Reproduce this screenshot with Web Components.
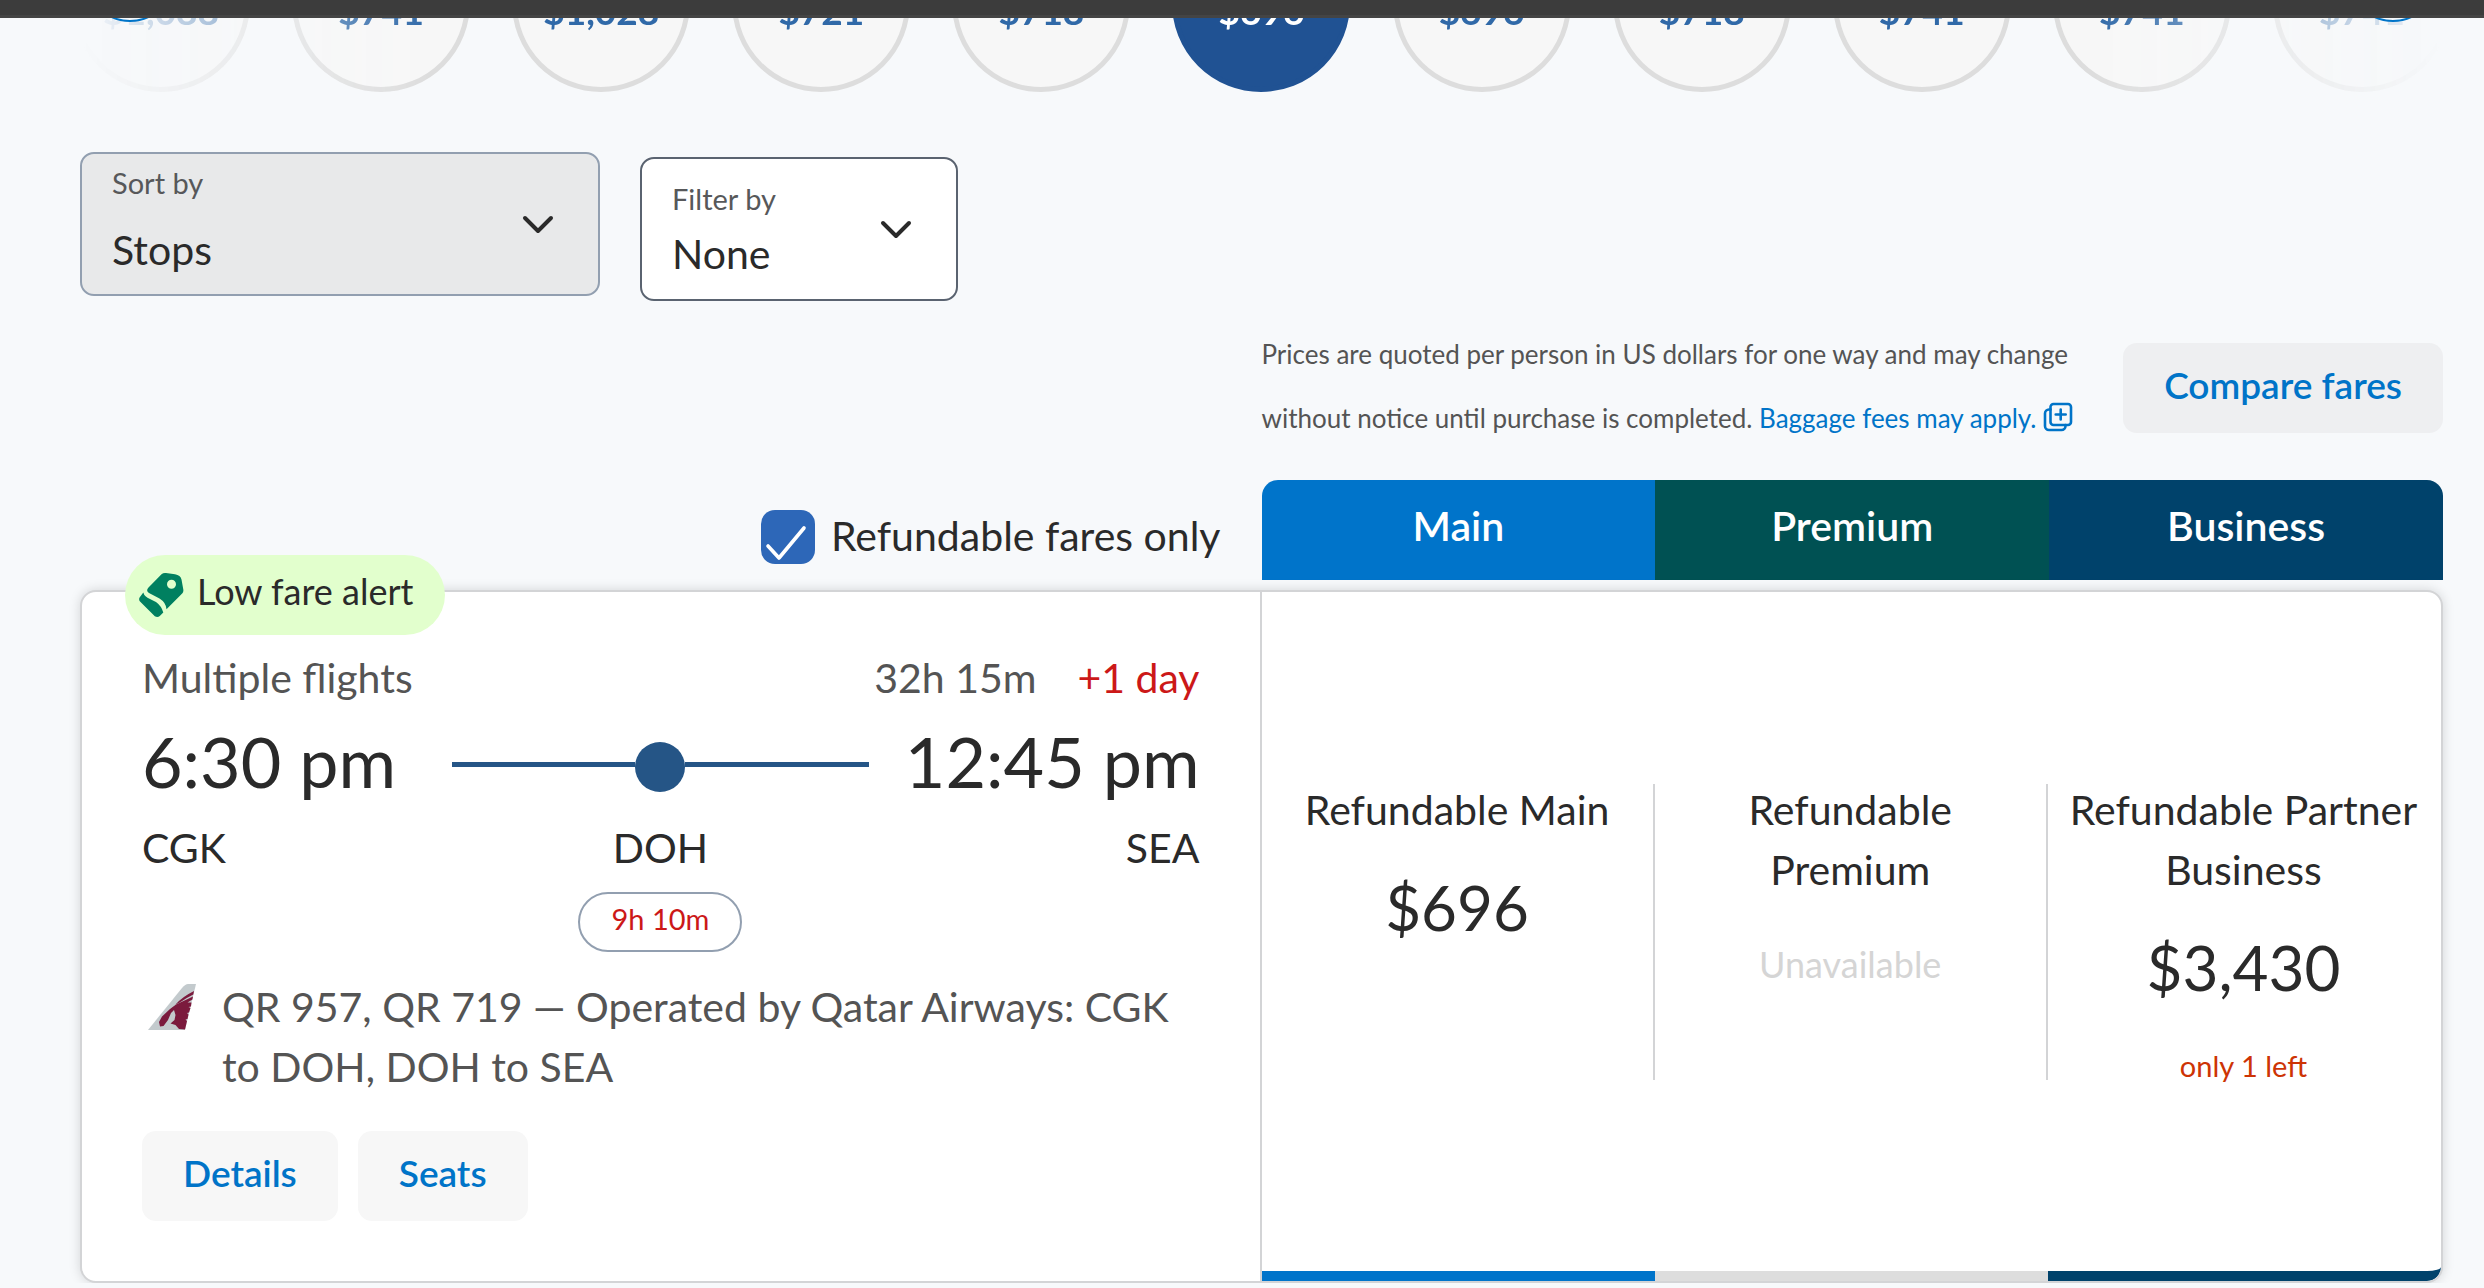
<!DOCTYPE html>
<html lang="en">
<head>
<meta charset="utf-8">
<title>Flight results</title>
<style>
  body {
    margin: 0;
    background: #f7f9fb;
    color: #2a2a2a;
    font-family: Lato, "Liberation Sans", sans-serif;
    font-size: 41px;
    line-height: 60px;
    --page: #f7f9fb;
    --link: #0074c8;
    --muted: #545454;
    --line: #d3d4d6;
    --edge: #929fb0;
  }
</style>
</head>
<body>
<flight-results></flight-results>

<script>
const define = (name, html, setup) => {
  const template = document.createElement('template');
  template.innerHTML = html;
  customElements.define(name, class extends HTMLElement {
    constructor() {
      super();
      this.attachShadow({ mode: 'open' }).append(template.content.cloneNode(true));
    }
    connectedCallback() {
      if (setup) setup(this, this.shadowRoot);
    }
  });
};

define('top-bar', `
  <style>
    :host { display: block; height: 15px; background: #3c3c3c; border-bottom: 3px solid #444; }
  </style>`);

define('date-price', `
  <style>
    :host { display: flex; justify-content: center; }
    button {
      box-sizing: border-box; width: 178px; height: 178px; padding: 0 0 56px;
      display: flex; align-items: flex-end; justify-content: center;
      border: 5px solid #ddd; border-radius: 50%; background: #f7f7f7;
      font: inherit; font-size: 37px; line-height: 40px; font-weight: 700; color: #3069a8;
    }
    :host([selected]) button { background: #205293; border-color: #205293; color: #fff; }
  </style>
  <button type="button"><slot></slot></button>`);

define('date-strip', `
  <style>
    :host { display: block; position: relative; overflow: hidden; height: 74px; }
    .days {
      height: 100%; margin: 0 12px 0 51px;
      display: grid; grid-template: 100% / repeat(11, 1fr); align-items: end;
      -webkit-mask: linear-gradient(90deg, transparent 30px, #000 380px, #000 calc(100% - 380px), transparent calc(100% - 30px));
      mask: linear-gradient(90deg, transparent 30px, #000 380px, #000 calc(100% - 380px), transparent calc(100% - 30px));
    }
    .arrow {
      position: absolute; bottom: 70px; box-sizing: border-box; width: 88px; height: 88px; padding: 0;
      border: 2px solid var(--link); border-radius: 50%; background: var(--page);
    }
    .prev { left: 86px; }
    .next { right: 47px; }
  </style>
  <div class="days"><slot></slot></div>
  <button class="arrow prev" type="button" aria-label="Earlier dates"></button>
  <button class="arrow next" type="button" aria-label="Later dates"></button>`);

define('select-field', `
  <style>
    :host {
      box-sizing: border-box; height: 144px; padding: 0 40px 0 30px;
      display: grid; grid-template-columns: 1fr auto; align-items: center;
      border: 2px solid #5a6370; border-radius: 14px; background: #fff;
    }
    :host([shaded]) { border-color: var(--edge); background: #e8e9ea; }
    .text { display: flex; flex-direction: column; gap: 5px; padding-top: 5px; }
    :host([shaded]) .text { gap: 17px; padding: 0 0 6px; }
    label { font-size: 29px; line-height: 40px; color: #57585a; }
    select {
      appearance: none; margin: 0; padding: 0; border: 0; background: none; width: 100%;
      font: inherit; line-height: 60px; height: 60px; color: inherit;
    }
    svg { width: 40px; height: 40px; pointer-events: none; }
  </style>
  <div class="text">
    <label for="value"></label>
    <select id="value"><option></option></select>
  </div>
  <svg viewBox="0 0 40 40" fill="none" stroke="#2a2a2a" stroke-width="4" stroke-linecap="round" stroke-linejoin="round"><path d="M7 14 20 27 33 14"/></svg>`,
  (host, root) => {
    root.querySelector('label').textContent = host.getAttribute('label');
    root.querySelector('option').textContent = host.getAttribute('value');
  });

define('soft-button', `
  <style>
    :host { display: block; }
    button {
      height: 90px; padding: 0 41px 7px; border: 0; border-radius: 14px;
      background: var(--soft, #f7f7f7); color: var(--link);
      font: inherit; font-size: 37px; font-weight: 600; white-space: nowrap;
    }
  </style>
  <button type="button"><slot></slot></button>`);

define('refundable-toggle', `
  <style>
    :host { display: block; }
    label { display: flex; align-items: flex-end; gap: 16px; }
    .box { display: grid; padding-bottom: 2px; }
    .box > * { grid-area: 1 / 1; }
    input { appearance: none; margin: 0; width: 54px; height: 54px; border-radius: 14px; background: #2d67b8; }
    svg { width: 54px; height: 54px; pointer-events: none; }
  </style>
  <label for="refundable">
    <span class="box">
      <input id="refundable" type="checkbox" checked>
      <svg viewBox="0 0 54 54" fill="none" stroke="#fff" stroke-width="3.6" stroke-linecap="round" stroke-linejoin="round"><path d="M7 36 18 48 43 18"/></svg>
    </span>
    <span><slot></slot></span>
  </label>`);

define('cabin-tabs', `
  <style>
    :host { display: grid; grid-template-columns: repeat(3, 1fr); border-radius: 16px 16px 0 0; overflow: hidden; }
    div { height: 100px; display: flex; align-items: center; justify-content: center; box-sizing: border-box; padding-bottom: 8px;
      color: #fff; font-weight: 600; }
    .main { background: #0074ca; }
    .premium { background: #005153; }
    .business { background: #00426b; }
  </style>
  <div class="main">Main</div><div class="premium">Premium</div><div class="business">Business</div>`);

define('fare-notice', `
  <style>
    :host { display: flex; align-items: flex-end; justify-content: space-between; gap: 40px; }
    p { margin: 0; flex: 1; font-size: 26px; line-height: 64px; color: var(--muted); }
    a { color: var(--link); text-decoration: none; }
    svg { width: 30px; height: 30px; margin-left: 6px; vertical-align: -4px; }
    soft-button { --soft: #eeeff1; margin-bottom: 17px; }
  </style>
  <p>Prices are quoted per person in US dollars for one way and may change without notice until purchase is completed. <a href="#baggage">Baggage fees may apply.<svg viewBox="0 0 30 30" fill="none" stroke="#0074c8" stroke-width="2.6" stroke-linecap="round" stroke-linejoin="round"><rect x="7.500" y="2" width="20.500" height="21" rx="3"/><path d="M17.700 7.500v10M12.700 12.500h10M7.500 7.500H6a4 4 0 0 0-4 4V24a4 4 0 0 0 4 4H18.500a4 4 0 0 0 4-4V23"/></svg></a></p>
  <soft-button>Compare fares</soft-button>`);

define('alert-pill', `
  <style>
    :host {
      height: 80px; padding: 0 32px 0 14px; display: inline-flex; align-items: center; gap: 13px;
      border-radius: 40px; background: #e2ffcd; font-size: 36px; white-space: nowrap;
    }
    svg { width: 45px; height: 44px; }
    span { padding-bottom: 9px; }
  </style>
  <svg viewBox="0 0 45 44" fill="#008060"><path fill-rule="evenodd" d="M22.500 1.200Q24.500-.3 27 .1L36 1.200Q41.500 2.200 42.500 6.500L44.400 17Q44.500 19 43.400 20.300L27.500 36.300Q27 29.500 20.500 25.500L10 20Q6.500 17.600 9.500 14.400ZM32.500 6.800a4.500 4.500 0 1 0 0 9 4.500 4.500 0 0 0 0-9Z"/><path d="M4.300 19.500Q5.500 23.800 11 26L17 29Q22.500 33 24.300 39.500L20.800 43Q18.500 44.800 15.800 43.200L1 28.500Q-.5 26.500.6 24.500Z"/></svg>
  <span><slot></slot></span>`);

define('flight-route', `
  <style>
    :host { display: grid; grid-template-columns: minmax(274px, auto) 1fr auto; column-gap: 36px; color: #2a2a2a; }
    .time { font-size: 70px; line-height: 90px; margin: 8px 0 12px; white-space: nowrap; }
    .path { display: flex; align-items: center; padding-top: 8px; }
    .path i { flex: 1; height: 5px; margin-bottom: 5px; background: #255586; }
    .path b { width: 50px; height: 50px; border-radius: 50%; background: #255586; }
    .mid { display: flex; flex-direction: column; align-items: center; gap: 14px; }
    .end { text-align: right; }
    .wait {
      box-sizing: border-box; height: 60px; padding: 0 31px; border: 2px solid var(--edge); border-radius: 30px;
      font-size: 29px; line-height: 50px; color: #cc1818;
    }
  </style>
  <div class="time">6:30 pm</div>
  <div class="path"><i></i><b></b><i></i></div>
  <div class="time end">12:45 pm</div>
  <div>CGK</div>
  <div class="mid"><span>DOH</span><span class="wait">9h 10m</span></div>
  <div class="end">SEA</div>`);

define('fare-option', `
  <style>
    :host {
      --bar: #ddd; display: flex; align-items: center;
      border-bottom: 10px solid var(--bar);
    }
    :host([last]) { border-bottom-right-radius: 14px; }
    button {
      box-sizing: border-box; width: 100%; height: 296px; padding: 0 16px; margin: 0;
      display: flex; flex-direction: column; align-items: center; justify-content: flex-start;
      border: 0; border-right: 2px solid var(--line); background: none; font: inherit; color: #2a2a2a;
    }
    :host([last]) button { border-right-color: transparent; }
    .name { margin-top: -4px; }
    .price { margin-top: 31px; font-size: 62px; line-height: 72px; }
    .none { margin-top: 44px; font-size: 36px; line-height: 40px; color: #d5d5d5; }
    .left { margin-top: 48px; font-size: 29px; line-height: 30px; color: #cd3405; }
  </style>
  <button type="button"><span class="name"></span></button>`,
  (host, root) => {
    const button = root.querySelector('button');
    root.querySelector('.name').textContent = host.getAttribute('name');
    host.style.setProperty('--bar', host.getAttribute('bar'));
    for (const part of ['price', 'none', 'left']) {
      if (!host.hasAttribute(part)) continue;
      const line = document.createElement('span');
      line.className = part;
      line.textContent = host.getAttribute(part);
      button.append(line);
    }
    button.disabled = host.hasAttribute('none');
  });

define('flight-card', `
  <style>
    :host { display: block; position: relative; }
    article {
      display: grid; grid-template-columns: 1fr 1fr; overflow: hidden;
      border: 2px solid var(--line); border-radius: 16px; background: #fff;
      box-shadow: 0 0 12px rgba(0, 0, 0, .15);
    }
    .trip { padding: 56px 60px 60px; border-right: 2px solid var(--line); }
    .summary { display: flex; color: var(--muted); }
    .summary span:first-child { flex: 1; }
    .plus { margin-left: 41px; color: #cc1818; }
    .operator { display: flex; gap: 26px; margin-top: 25px; color: var(--muted); }
    .operator svg { flex: none; width: 48px; height: 46px; margin: 7px 0 0 6px; }
    .actions { display: flex; gap: 20px; margin-top: 34px; }
    .fares { display: grid; grid-template-columns: repeat(3, 1fr); }
    alert-pill { position: absolute; left: 45px; top: -35px; }
  </style>
  <article>
    <div class="trip">
      <div class="summary"><span>Multiple flights</span><span>32h 15m</span><span class="plus">+1 day</span></div>
      <flight-route></flight-route>
      <div class="operator">
        <svg viewBox="0 0 48 46"><path fill="#c3cacd" d="M0 46 34 4Q37.500 0 40 0H48L37 46Z"/><g fill="#7b1a3d"><path d="M46 7Q34 13 27.500 20.500L31 19Q38 14 45.300 10.500Z"/><path d="M45 12.500 44.400 15.500 39.500 18.500H43.500L43 22.500 40.500 23 42.500 24 41 28.500 39 29 40.500 30.500 39.500 35 37.500 35.500 39 37 37 45.500 31 45 27.500 41 22.500 39.500 26.500 36 27.500 31 26 26 23 29 20 36 15.500 42 12 42.500 11 38 14 32.500 22 25 28 20.500Z"/></g></svg>
        <span>QR 957, QR 719 — Operated by Qatar Airways: CGK to DOH, DOH to SEA</span>
      </div>
      <div class="actions"><soft-button>Details</soft-button><soft-button>Seats</soft-button></div>
    </div>
    <div class="fares">
      <fare-option name="Refundable Main" price="$696" bar="#0074ca"></fare-option>
      <fare-option name="Refundable Premium" none="Unavailable" bar="#dddddd"></fare-option>
      <fare-option name="Refundable Partner Business" price="$3,430" left="only 1 left" bar="#00426b" last></fare-option>
    </div>
  </article>
  <alert-pill>Low fare alert</alert-pill>`);

define('flight-results', `
  <style>
    :host { display: block; }
    main { margin: 60px 41px 0 80px; }
    .filters { display: flex; gap: 40px; height: 149px; }
    .sort { width: 520px; }
    .filter { width: 318px; align-self: flex-end; }
    .head { display: grid; grid-template-columns: 1fr 1fr; margin: 21px 0 10px; }
    refundable-toggle { justify-self: end; align-self: end; padding: 0 41px 14px 0; }
    fare-notice { margin-bottom: 30px; }
  </style>
  <top-bar></top-bar>
  <date-strip>
    <date-price>$1,088</date-price><date-price>$741</date-price><date-price>$1,028</date-price>
    <date-price>$721</date-price><date-price>$718</date-price><date-price selected>$696</date-price>
    <date-price>$696</date-price><date-price>$718</date-price><date-price>$741</date-price>
    <date-price>$741</date-price><date-price>$741</date-price>
  </date-strip>
  <main>
    <div class="filters">
      <select-field class="sort" label="Sort by" value="Stops" shaded></select-field>
      <select-field class="filter" label="Filter by" value="None"></select-field>
    </div>
    <div class="head">
      <refundable-toggle>Refundable fares only</refundable-toggle>
      <div>
        <fare-notice></fare-notice>
        <cabin-tabs></cabin-tabs>
      </div>
    </div>
    <flight-card></flight-card>
  </main>`);
</script>
</body>
</html>
